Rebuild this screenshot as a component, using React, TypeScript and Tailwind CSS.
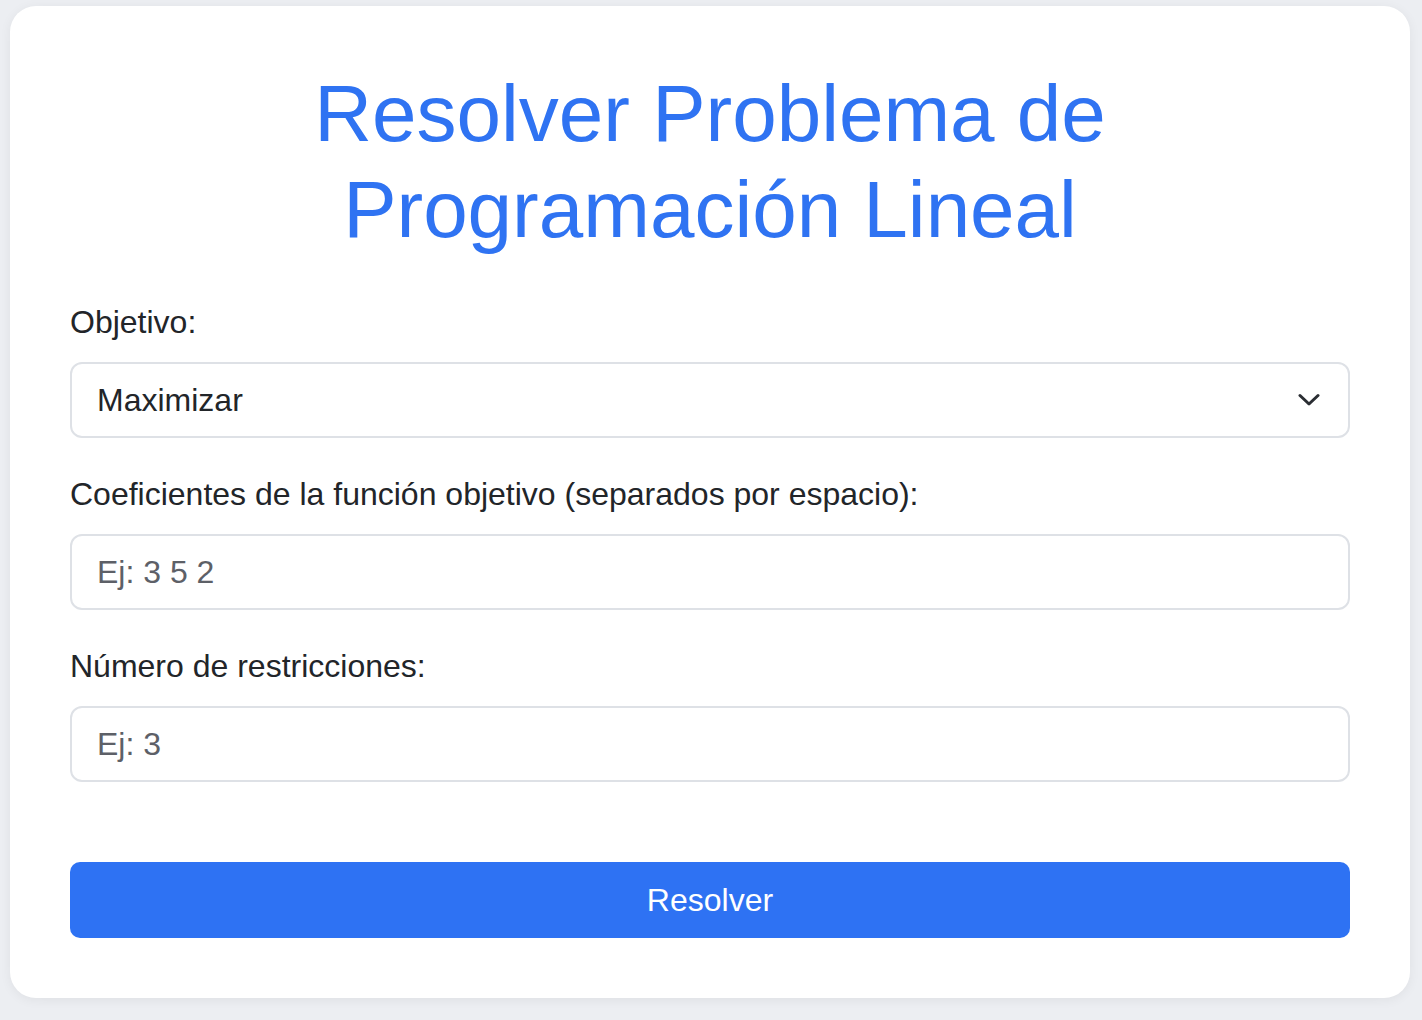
import React from 'react'

function Field({ label, children }: { label: string; children: React.ReactNode }) {
  return (
    <div className="flex flex-col">
      <label className="mb-[22px] text-[32px] leading-[36px] text-[#222529]">{label}</label>
      {children}
    </div>
  )
}

function App() {
  return (
    <div
      className="min-h-screen bg-[#eceef2] pl-[10px] pr-[12px] pt-[6px] pb-[22px]"
      style={{ fontFamily: '"Liberation Sans", Arial, Helvetica, sans-serif' }}
    >
      <div className="rounded-[26px] bg-white p-[60px] shadow-[0_2px_12px_rgba(0,0,0,0.06)]">
        <h1 className="mb-[46px] text-center text-[80px] leading-[96px] font-normal text-[#2f73f2]">
          Resolver Problema de
          <br />
          Programación Lineal
        </h1>

        <div className="flex flex-col gap-[38px]">
          <Field label="Objetivo:">
            <div className="relative">
              <select
                defaultValue="max"
                className="h-[76px] w-full appearance-none rounded-[12px] border-2 border-[#dee1e6] bg-white px-[25px] text-[32px] text-[#222529] outline-none"
              >
                <option value="max">Maximizar</option>
                <option value="min">Minimizar</option>
              </select>
              <svg
                className="pointer-events-none absolute right-[30px] top-1/2 -translate-y-1/2"
                width="22"
                height="13"
                viewBox="0 0 22 13"
                fill="none"
              >
                <polyline points="2,2 11,10.5 20,2" stroke="#2b2e33" strokeWidth="3" strokeLinecap="round" strokeLinejoin="round" />
              </svg>
            </div>
          </Field>

          <Field label="Coeficientes de la función objetivo (separados por espacio):">
            <input
              type="text"
              placeholder="Ej: 3 5 2"
              className="h-[76px] w-full rounded-[12px] border-2 border-[#dee1e6] px-[25px] text-[32px] text-[#222529] outline-none placeholder:text-[#5d6067]"
            />
          </Field>

          <Field label="Número de restricciones:">
            <input
              type="number"
              placeholder="Ej: 3"
              className="h-[76px] w-full rounded-[12px] border-2 border-[#dee1e6] px-[25px] text-[32px] text-[#222529] outline-none placeholder:text-[#5d6067]"
            />
          </Field>
        </div>

        <button className="mt-[80px] h-[76px] w-full rounded-[10px] bg-[#2e72f3] text-[32px] text-white">
          Resolver
        </button>
      </div>
    </div>
  )
}

export default App
